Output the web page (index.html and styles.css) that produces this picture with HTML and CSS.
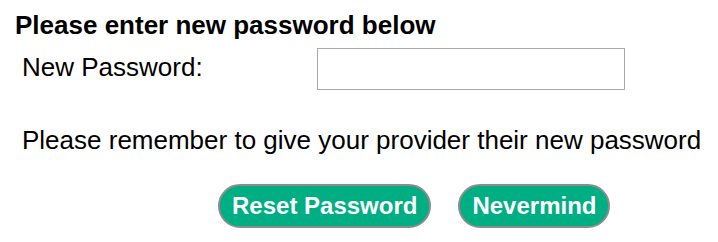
FILE: index.html
```html
<!DOCTYPE html>
<html lang="en">

<head>
    <meta charset="UTF-8">
    <meta name="viewport" content="width=device-width, initial-scale=1.0">
    <title>Reset Password</title>
    <link rel="stylesheet" href="styles.css">
</head>

<body>
    <div class="reset-form">
        <h2 class="title">Please enter new password below</h2>
        <div class="field-row">
            <label for="new-password">New Password:</label>
            <input id="new-password" type="password">
        </div>
        <p class="note">Please remember to give your provider their new password</p>
        <div class="actions">
            <button class="btn">Reset Password</button>
            <button class="btn">Nevermind</button>
        </div>
    </div>
</body>

</html>
```

FILE: styles.css
```css
* {
    box-sizing: border-box;
    margin: 0;
    padding: 0;
}

body {
    background: #ffffff;
    font-family: "Liberation Sans", Arial, sans-serif;
    color: #000;
}

.reset-form {
    padding: 10px 15px;
}

.title {
    font-size: 26px;
    font-weight: bold;
    line-height: 30px;
}

.field-row {
    display: flex;
    align-items: center;
    margin-top: 8px;
    padding-left: 7px;
}

.field-row label {
    font-size: 26px;
    line-height: 30px;
    width: 295px;
    margin-bottom: 5px;
}

#new-password {
    width: 308px;
    height: 42px;
    border: 1px solid #a9a9a9;
}

.note {
    font-size: 26px;
    line-height: 30px;
    margin-top: 35px;
    padding-left: 7px;
}

.actions {
    display: flex;
    gap: 27px;
    margin-top: 29px;
    padding-left: 203px;
}

.btn {
    height: 44px;
    padding: 0 12px;
    border: 2px solid #8c8c8c;
    border-radius: 22px;
    background: #00ae83;
    color: #fff;
    font-family: "Liberation Sans", Arial, sans-serif;
    font-size: 24px;
    font-weight: bold;
}
```
